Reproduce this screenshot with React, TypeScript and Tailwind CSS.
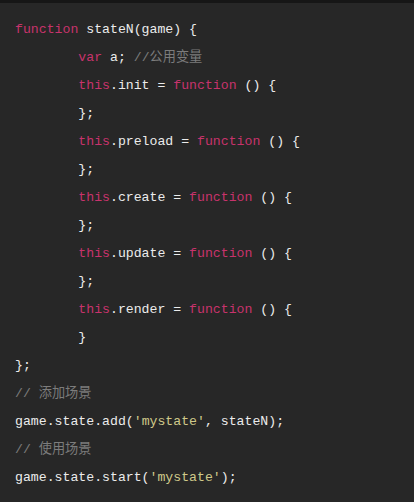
const K = ({ children }: { children: React.ReactNode }) => (
  <span className="text-[#c8336c]">{children}</span>
);
const C = ({ children }: { children: React.ReactNode }) => (
  <span className="text-[#7c7c7c]">{children}</span>
);
const S = ({ children }: { children: React.ReactNode }) => (
  <span className="text-[#cfc98a]">{children}</span>
);

const I = '        ';

export default function App() {
  return (
    <div className="w-[414px] h-[502px] bg-[#272727] border-t-[3px] border-[#161616] overflow-hidden">
      <pre
        className="pl-[15px] pt-[13px] text-[13.2px] leading-[28px] text-[#ececec]"
        style={{ fontFamily: '"Liberation Mono", "Noto Sans CJK SC", monospace' }}
      >
        <div><K>function</K> stateN(game) {'{'}</div>
        <div>{I}<K>var</K> a; <C>//公用变量</C></div>
        <div>{I}<K>this</K>.init = <K>function</K> () {'{'}</div>
        <div>{I}{'};'}</div>
        <div>{I}<K>this</K>.preload = <K>function</K> () {'{'}</div>
        <div>{I}{'};'}</div>
        <div>{I}<K>this</K>.create = <K>function</K> () {'{'}</div>
        <div>{I}{'};'}</div>
        <div>{I}<K>this</K>.update = <K>function</K> () {'{'}</div>
        <div>{I}{'};'}</div>
        <div>{I}<K>this</K>.render = <K>function</K> () {'{'}</div>
        <div>{I}{'}'}</div>
        <div>{'};'}</div>
        <div><C>// 添加场景</C></div>
        <div>game.state.add(<S>'mystate'</S>, stateN);</div>
        <div><C>// 使用场景</C></div>
        <div>game.state.start(<S>'mystate'</S>);</div>
      </pre>
    </div>
  );
}
